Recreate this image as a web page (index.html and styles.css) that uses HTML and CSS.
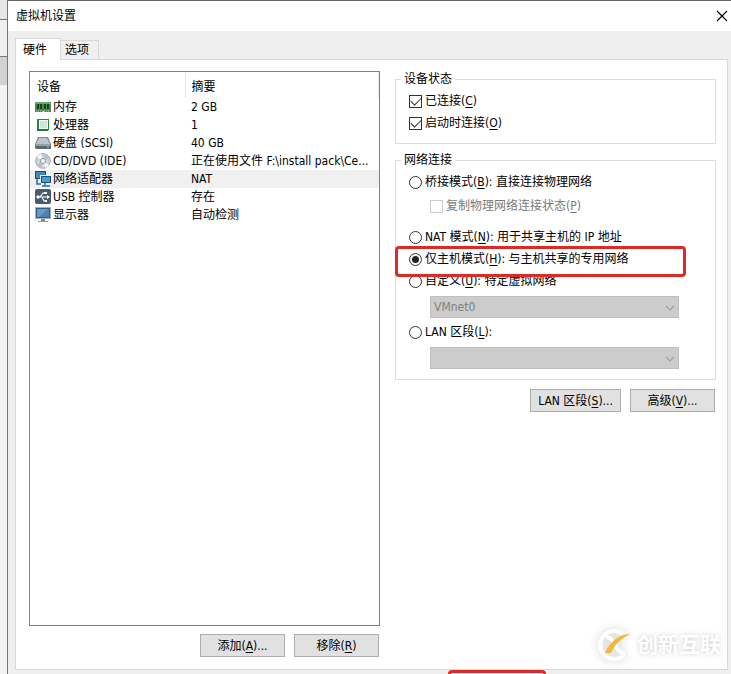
FILE: index.html
```html
<!DOCTYPE html>
<html lang="zh-CN">
<head>
<meta charset="utf-8">
<meta name="viewport" content="width=device-width, initial-scale=1">
<title>虚拟机设置</title>
<link rel="stylesheet" href="styles.css">
</head>
<body>
<div class="backdrop" aria-hidden="true"><span class="slab top"></span><span class="slab mid"></span><span class="slab dark"></span></div>
<main class="dialog">
  <header class="titlebar">
    <h1>虚拟机设置</h1>
    <button class="close" type="button" aria-label="关闭"><svg width="12" height="12" viewBox="0 0 12 12"><path d="M1 1l10 10M11 1L1 11" fill="none" stroke="#000" stroke-width="1.2"/></svg></button>
  </header>
  <div class="tabs" role="tablist">
    <button class="tab active" type="button" role="tab" aria-selected="true">硬件</button>
    <button class="tab" type="button" role="tab" aria-selected="false">选项</button>
  </div>
  <section class="panel">
    <div class="devices">
      <div class="listbox">
        <table>
          <thead><tr><th class="name">设备</th><th>摘要</th></tr></thead>
          <tbody>
            <tr><td><span class="device"><svg width="16" height="16" viewBox="0 0 16 16"><path d="M0 3h16v10H9v-1H8v1H0z" fill="#3c9048"/><path d="M0 3h16v2H0z" fill="#65ad65"/><path d="M2 5h2v5H2zM5 5h2v5H5zM9 5h2v5H9zM12 5h2v5h-2z" fill="#263c2b"/><path d="M1 12h14" stroke="#b9d59c" stroke-dasharray="1 1"/></svg>内存</span></td><td>2 GB</td></tr>
            <tr><td><span class="device"><svg width="16" height="16" viewBox="0 0 16 16"><path d="M2 2h12v11l-2 1H2z" fill="#25894e"/><path d="M4 3h9v9H4z" fill="#f4f8f5"/><path d="M5 4h7v7H5z" fill="#d5e2d8"/><path d="M2 13h11" stroke="#166337"/></svg>处理器</span></td><td>1</td></tr>
            <tr><td><span class="device"><svg width="16" height="16" viewBox="0 0 16 16"><path d="M3 2h10l3 7v4l-1 1H1l-1-1V9z" fill="#7e898f"/><path d="M4 3h8l3 6H1z" fill="#bcc5c9"/><path d="M1 9h14v2H1z" fill="#93a0a6"/><path d="M0 11h16v3H1z" fill="#5d686e"/><path d="M12 12h2" stroke="#8ed17c"/></svg>硬盘 (SCSI)</span></td><td>40 GB</td></tr>
            <tr><td><span class="device"><svg width="16" height="16" viewBox="0 0 16 16"><circle cx="8" cy="8" r="7.3" fill="#cfd5d9" stroke="#98a2a8"/><path d="M8 8L2 4a7 7 0 0 1 4-3zM8 8l6 4a7 7 0 0 1-4 3z" fill="#f7f9fa"/><path d="M8 8l2-7a7 7 0 0 1 4 4zM8 8l-2 7a7 7 0 0 1-4-4z" fill="#b9c3c9"/><circle cx="8" cy="8" r="2.6" fill="#eef1f3" stroke="#8f9ba2"/><circle cx="8" cy="8" r="1" fill="#fff"/></svg>CD/DVD (IDE)</span></td><td>正在使用文件 F:\install pack\Ce...</td></tr>
            <tr class="selected"><td><span class="device"><svg width="16" height="16" viewBox="0 0 16 16"><path d="M0 0h11v8H0z" fill="#194f7a"/><path d="M1 1h9v6H1z" fill="#3e88be"/><path d="M5 4h11v9H5z" fill="#eef7fb"/><path d="M6 5h10v7H6z" fill="#145580"/><path d="M7 6h8v5H7z" fill="#459dd5"/><path d="M2 8v5h4M10 12v2M7 15h8" fill="none" stroke="#2c668e" stroke-width="1.5"/></svg>网络适配器</span></td><td>NAT</td></tr>
            <tr><td><span class="device"><svg width="16" height="16" viewBox="0 0 16 16"><rect x="0" y="0" width="16" height="15" rx="2" fill="#465c70"/><path d="M3 8h10M5 8l3-4h2M7 8l2 4h2" fill="none" stroke="#fff" stroke-width="1.1"/><circle cx="3" cy="8" r="1.7" fill="#fff"/><path d="M12 6l3 2-3 2zM9 3h3v2H9zM10 11h2v2h-2z" fill="#fff"/></svg>USB 控制器</span></td><td>存在</td></tr>
            <tr><td><span class="device"><svg width="16" height="16" viewBox="0 0 16 16"><path d="M0 0h16v12H0z" fill="#a2b4c2"/><path d="M1 1h14v10H1z" fill="#315f8b"/><path d="M2 2h12v8H2z" fill="#4e82b1"/><path d="M2 2h11L4 10H2z" fill="#6b98bd"/><path d="M6 12h4v2H6z" fill="#7b8a94"/><path d="M3 14h10v1H3z" fill="#8b9ba5"/></svg>显示器</span></td><td>自动检测</td></tr>
          </tbody>
        </table>
      </div>
      <div class="actions">
        <button class="btn" type="button">添加(<u>A</u>)...</button>
        <button class="btn" type="button">移除(<u>R</u>)</button>
      </div>
    </div>
    <form class="settings">
      <fieldset class="status">
        <legend>设备状态</legend>
        <label class="option"><input type="checkbox" checked><span>已连接(<u>C</u>)</span></label>
        <label class="option"><input type="checkbox" checked><span>启动时连接(<u>O</u>)</span></label>
      </fieldset>
      <fieldset class="network">
        <legend>网络连接</legend>
        <label class="option"><input type="radio" name="net"><span>桥接模式(<u>B</u>): 直接连接物理网络</span></label>
        <label class="option nested"><input type="checkbox" disabled><span>复制物理网络连接状态(<u>P</u>)</span></label>
        <label class="option"><input type="radio" name="net"><span>NAT 模式(<u>N</u>): 用于共享主机的 IP 地址</span></label>
        <label class="option marked"><input type="radio" name="net" checked><span>仅主机模式(<u>H</u>): 与主机共享的专用网络</span></label>
        <label class="option"><input type="radio" name="net"><span>自定义(<u>U</u>): 特定虚拟网络</span></label>
        <div class="picker"><select disabled aria-label="特定虚拟网络"><option>VMnet0</option></select><svg width="10" height="6" viewBox="0 0 10 6"><path d="M1 1l4 4 4-4" fill="none" stroke="#a0a0a0" stroke-width="1.2"/></svg></div>
        <label class="option"><input type="radio" name="net"><span>LAN 区段(<u>L</u>):</span></label>
        <div class="picker"><select disabled aria-label="LAN 区段"><option></option></select><svg width="10" height="6" viewBox="0 0 10 6"><path d="M1 1l4 4 4-4" fill="none" stroke="#a0a0a0" stroke-width="1.2"/></svg></div>
      </fieldset>
      <div class="actions">
        <button class="btn wide" type="button">LAN 区段(<u>S</u>)...</button>
        <button class="btn" type="button">高级(<u>V</u>)...</button>
      </div>
    </form>
  </section>
  <footer class="footer"><span class="confirm-mark"></span></footer>
  <div class="watermark">
    <svg width="36" height="34" viewBox="0 0 36 34"><path d="M27 6A14 14 0 1 0 28 27" fill="none" stroke="#fff" stroke-width="4"/><path d="M10 9c5 0 7 4 9 8s5 8 10 9" fill="none" stroke="#fff" stroke-width="4"/><path d="M35 6C24 6 14 13 9 25h6C19 16 25 10 35 6z" fill="#f3b936"/></svg>
    <span>创新互联</span>
  </div>
</main>
</body>
</html>
```
FILE: styles.css
```css
* { box-sizing: border-box; }
body {
  margin: 0;
  display: flex;
  min-height: 100vh;
  overflow: hidden;
  background: #f0f0f0;
  color: #000;
  font: 12px/18px "DejaVu Sans Condensed", "Noto Sans", "Noto Sans CJK SC", sans-serif;
}
button, select { font: inherit; color: inherit; }
u { text-underline-offset: 2px; }

.backdrop { width: 7px; background: #f3f3f3; }
.slab { display: block; border-bottom: 1px solid #777; background: #e6e6e6; }
.slab.top { height: 20px; }
.slab.mid { height: 37px; background: #efefef; }
.slab.dark { height: 28px; background: #d2d2d2; border: 0; }

.dialog {
  position: relative;
  flex: 1;
  min-width: 0;
  display: flex;
  flex-direction: column;
  border-top: 1px solid #666;
  border-left: 1px solid #777;
  background: #efefef;
}
.titlebar {
  display: flex;
  align-items: center;
  justify-content: space-between;
  height: 30px;
  padding: 0 3px 0 8px;
  background: #fff;
}
h1 { margin: 0; font-size: 12px; font-weight: 400; }
.close { display: flex; padding: 0; border: 0; background: none; }

.tabs { display: flex; align-items: flex-end; padding: 7px 0 0 7px; }
.tab {
  height: 19px;
  padding: 0 9px 0 4px;
  border: 1px solid #d9d9d9;
  border-left: 0;
  border-bottom: 0;
  background: #f0f0f0;
}
.tab.active {
  position: relative;
  height: 22px;
  margin-bottom: -1px;
  padding: 0 13px 0 7px;
  border-left: 1px solid #d9d9d9;
  background: #fff;
}

.panel {
  flex: 1;
  display: grid;
  grid-template-columns: minmax(0, 351fr) minmax(0, 321fr);
  gap: 15px;
  margin: 0 3px 0 7px;
  padding: 11px 11px 12px 13px;
  border: 1px solid #d9d9d9;
  background: #fff;
}
.devices { display: flex; flex-direction: column; }
.listbox { flex: 1; border: 1px solid #828282; }
table { width: 100%; border-collapse: collapse; table-layout: fixed; }
th, td {
  height: 18px;
  padding: 0 6px;
  overflow: hidden;
  text-align: left;
  text-overflow: ellipsis;
  white-space: nowrap;
  font-weight: 400;
}
th { height: 26px; padding-top: 3px; border-right: 1px solid #e5e5e5; }
th.name { width: 155px; padding-left: 7px; }
td:first-child { padding: 0 0 0 5px; }
.selected { background: #f0f0f0; }
.device { display: flex; align-items: center; gap: 2px; }
.device svg { flex: none; }

.actions { display: flex; justify-content: flex-end; gap: 9px; padding: 8px 1px 0 0; }
.btn {
  width: 85px;
  height: 23px;
  padding: 0;
  border: 1px solid #adadad;
  background: #e1e1e1;
}
.btn.wide { width: 91px; }

.settings { margin-top: -1px; }
fieldset { margin: 0; min-width: 0; border: 1px solid #dcdcdc; }
legend { margin-left: -8px; padding: 0 3px; }
.status { padding: 2px 13px 9px; }
.network { margin-top: 7px; padding: 2px 13px 10px; }
.option { position: relative; display: flex; align-items: center; gap: 3px; height: 22px; white-space: nowrap; }
.option input {
  appearance: none;
  flex: none;
  display: grid;
  place-items: center;
  width: 13px;
  height: 13px;
  margin: 0;
  border: 1px solid #333;
  background: #fff;
}
.option input[type="radio"] { border-radius: 50%; }
input[type="radio"]:checked::before { content: ""; width: 7px; height: 7px; border-radius: 50%; background: #222; }
input[type="checkbox"]:checked::before {
  content: "";
  width: 9px;
  height: 5px;
  margin-bottom: 3px;
  border: solid #333;
  border-width: 0 0 1px 1px;
  transform: rotate(-45deg);
}
.nested { margin: 2px 0 9px 21px; color: #7a7a7a; }
.option input:disabled { border-color: #ccc; }
.marked::after {
  content: "";
  position: absolute;
  z-index: 1;
  inset: -2px 16px -7px -14px;
  border: 3px solid #dc2b25;
  border-radius: 4px;
}
.picker { position: relative; margin: 4px 23px 3px 21px; }
.picker select {
  display: block;
  appearance: none;
  width: 100%;
  height: 22px;
  padding: 0 3px;
  border: 1px solid #bfbfbf;
  border-radius: 0;
  background: #ccc;
  color: #808080;
  opacity: 1;
}
.picker svg { position: absolute; right: 4px; top: 9px; }
.network .picker:last-child { margin-bottom: 0; }
.settings .actions { padding-top: 9px; }

.footer { height: 4px; overflow: hidden; padding-left: 440px; }
.confirm-mark { display: block; width: 98px; height: 24px; border: 3px solid #dc2b25; border-radius: 4px; }
.watermark {
  position: absolute;
  right: 10px;
  bottom: 12px;
  display: flex;
  align-items: center;
  gap: 5px;
  color: #fff;
  font-size: 21px;
  font-weight: 700;
  line-height: 34px;
  text-shadow: 0 0 5px #ccc;
}
.watermark svg { overflow: visible; filter: drop-shadow(0 0 5px #ccc); }
```
